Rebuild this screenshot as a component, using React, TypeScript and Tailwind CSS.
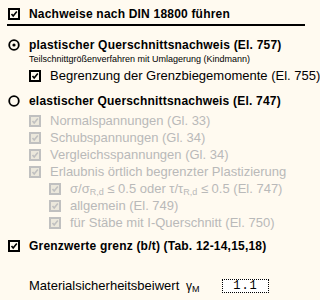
import React from 'react';

const CheckBox: React.FC<{ disabled?: boolean }> = ({ disabled }) => {
  const c = disabled ? '#c0c0c0' : '#000000';
  return (
    <svg width="12" height="12" viewBox="0 0 12 12" className="shrink-0">
      <rect x="1" y="1" width="10" height="10" fill={disabled ? '#ece8dc' : 'none'} stroke={c} strokeWidth="2" />
      <polyline points="3.5,6 5.2,8 8.8,3.6" fill="none" stroke={c} strokeWidth="1.6" />
    </svg>
  );
};

const Radio: React.FC<{ checked?: boolean }> = ({ checked }) => (
  <svg width="12" height="12" viewBox="0 0 12 12" className="shrink-0">
    <circle cx="6" cy="6" r="4.8" fill="none" stroke="#000" strokeWidth="1.8" />
    {checked && <circle cx="6" cy="6" r="1.6" fill="#000" />}
  </svg>
);

const GrayRow: React.FC<{ indent?: boolean; children: React.ReactNode }> = ({ indent, children }) => (
  <div className={`flex h-[17px] items-center gap-[9px] ${indent ? 'pl-[49px]' : 'pl-[29px]'}`}>
    <CheckBox disabled />
    <span className="text-[13px] text-[#b9b9b9] whitespace-nowrap">{children}</span>
  </div>
);

const App: React.FC = () => {
  return (
    <div className="w-[320px] h-[300px] overflow-hidden bg-[#fffaf0] text-black font-['Liberation_Sans',Arial,sans-serif]">
      {/* head option */}
      <div className="flex h-[16px] mt-[6px] items-center gap-[9px] pl-[8px]">
        <CheckBox />
        <span className="text-[12px] font-bold tracking-[0.2px] whitespace-nowrap">Nachweise nach DIN 18800 führen</span>
      </div>
      <div className="mt-[2px] ml-[7px] w-[298px] h-[2px] bg-black" />

      {/* plastic */}
      <div className="flex h-[16px] mt-[11px] items-center gap-[9px] pl-[8px]">
        <Radio checked />
        <span className="text-[12px] font-bold tracking-[0.2px] whitespace-nowrap">plastischer Querschnittsnachweis (El. 757)</span>
      </div>
      <div className="flex h-[14px] items-center pl-[29px]">
        <span className="text-[9px] whitespace-nowrap">Teilschnittgrößenverfahren mit Umlagerung (Kindmann)</span>
      </div>
      <div className="flex h-[16px] mt-[1px] items-center gap-[9px] pl-[29px]">
        <CheckBox />
        <span className="text-[13px] whitespace-nowrap">Begrenzung der Grenzbiegemomente (El. 755)</span>
      </div>

      {/* elastic */}
      <div className="flex h-[16px] mt-[9px] items-center gap-[9px] pl-[8px]">
        <Radio />
        <span className="text-[12px] font-bold tracking-[0.2px] whitespace-nowrap">elastischer Querschnittsnachweis (El. 747)</span>
      </div>
      <div className="mt-[3px]">
        <GrayRow>Normalspannungen (Gl. 33)</GrayRow>
        <GrayRow>Schubspannungen (Gl. 34)</GrayRow>
        <GrayRow>Vergleichsspannungen (Gl. 34)</GrayRow>
        <GrayRow>Erlaubnis örtlich begrenzter Plastizierung</GrayRow>
        <GrayRow indent>
          σ/σ<sub className="text-[9px]">R,d</sub> ≤ 0.5 oder τ/τ<sub className="text-[9px]">R,d</sub> ≤ 0.5 (El. 747)
        </GrayRow>
        <GrayRow indent>allgemein (El. 749)</GrayRow>
        <GrayRow indent>für Stäbe mit I-Querschnitt (El. 750)</GrayRow>
      </div>

      <div className="flex h-[16px] mt-[7px] items-center gap-[9px] pl-[8px]">
        <CheckBox />
        <span className="text-[12px] font-bold tracking-[0.2px] whitespace-nowrap">Grenzwerte grenz (b/t) (Tab. 12-14,15,18)</span>
      </div>

      {/* safety factor */}
      <div className="flex h-[16px] mt-[24px] items-center pl-[29px]">
        <span className="w-[157px] text-[13px] whitespace-nowrap">Materialsicherheitsbeiwert</span>
        <span className="w-[36px] text-[12px] whitespace-nowrap">
          γ<sub className="text-[9px]">M</sub>
        </span>
        <div className="flex h-[14px] w-[47px] items-center justify-center border border-dotted border-black bg-white">
          <span className="text-[12px] font-['Liberation_Mono',monospace] tracking-[1px]">1.1</span>
        </div>
      </div>
    </div>
  );
};

export default App;
